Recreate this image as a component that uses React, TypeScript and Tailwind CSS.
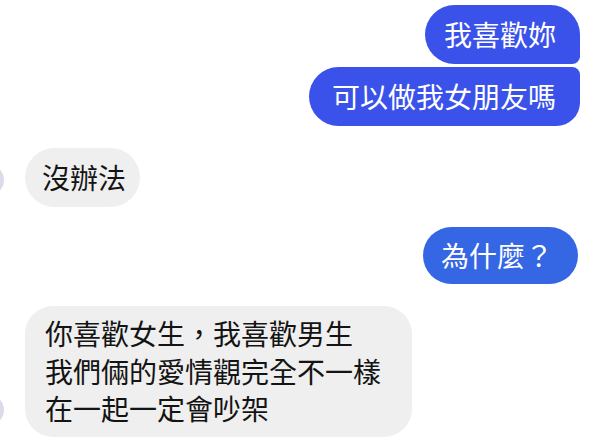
import React from "react";

const font = { fontFamily: '"Noto Sans CJK TC", "Noto Sans CJK SC", "Noto Sans", sans-serif' };

function Avatar() {
  return <div className="w-[30px] h-[30px] rounded-full bg-[#dcdbea] -ml-[26px] mr-[21px] shrink-0 self-end mb-[12px]" />;
}

export default function App() {
  return (
    <div className="w-[600px] h-[441px] bg-white overflow-hidden flex flex-col pt-[5px] pr-[20px]" style={font}>
      <div className="flex flex-col items-end gap-[3px]">
        <div className="bg-[#3b52ea] text-white text-[28px] leading-[37px] py-[11px] pl-[19px] pr-[24px] rounded-l-[30px] rounded-tr-[30px] rounded-br-[8px]">
          我喜歡妳
        </div>
        <div className="bg-[#3b52ea] text-white text-[28px] leading-[37px] py-[11px] pl-[23px] pr-[24px] rounded-l-[30px] rounded-tr-[8px] rounded-br-[24px]">
          可以做我女朋友嗎
        </div>
      </div>
      <div className="flex items-end mt-[22px]">
        <Avatar />
        <div className="bg-[#efefef] text-[#141414] text-[28px] leading-[37px] py-[11px] pl-[17px] pr-[14px] rounded-[30px]">
          沒辦法
        </div>
      </div>
      <div className="flex justify-end mt-[20px] pr-[2px]">
        <div className="bg-[#3566e4] text-white text-[28px] leading-[37px] py-[10px] pl-[18px] pr-[25px] rounded-[30px]">
          為什麼？
        </div>
      </div>
      <div className="flex items-end mt-[22px]">
        <Avatar />
        <div className="bg-[#efefef] text-[#141414] text-[28px] leading-[37.5px] py-[9px] pl-[20px] pr-[31px] rounded-[28px]">
          <div>你喜歡女生，我喜歡男生</div>
          <div>我們倆的愛情觀完全不一樣</div>
          <div>在一起一定會吵架</div>
        </div>
      </div>
    </div>
  );
}
